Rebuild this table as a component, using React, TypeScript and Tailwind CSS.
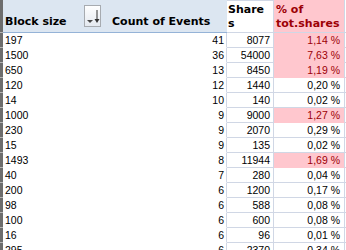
import React from "react";

type Row = [string, string, string, string, boolean];

const rows: Row[] = [
  ["197", "41", "8077", "1,14 %", true],
  ["1500", "36", "54000", "7,63 %", true],
  ["650", "13", "8450", "1,19 %", true],
  ["120", "12", "1440", "0,20 %", false],
  ["14", "10", "140", "0,02 %", false],
  ["1000", "9", "9000", "1,27 %", true],
  ["230", "9", "2070", "0,29 %", false],
  ["15", "9", "135", "0,02 %", false],
  ["1493", "8", "11944", "1,69 %", true],
  ["40", "7", "280", "0,04 %", false],
  ["200", "6", "1200", "0,17 %", false],
  ["98", "6", "588", "0,08 %", false],
  ["100", "6", "600", "0,08 %", false],
  ["16", "6", "96", "0,01 %", false],
  ["295", "6", "2370", "0,34 %", false],
];

function FilterButton() {
  return (
    <svg width="17" height="22" viewBox="0 0 17 22" className="mt-[5px] shrink-0">
      <defs>
        <linearGradient id="fb" x1="0" y1="0" x2="0" y2="1">
          <stop offset="0" stopColor="#ffffff" />
          <stop offset="1" stopColor="#e4e9f0" />
        </linearGradient>
      </defs>
      <rect x="0.5" y="0.5" width="16" height="21" fill="url(#fb)" stroke="#a7abb0" />
      <path d="M3 15h6l-3 3z" fill="#4a4a4a" />
      <path d="M13 5v11" stroke="#333" strokeWidth="1" />
      <path d="M10.5 14h5l-2.5 4z" fill="#333" />
    </svg>
  );
}

export default function App() {
  const head = "font-['DejaVu_Sans',sans-serif] font-bold text-[11px] leading-[14px]";
  const cell = "font-['Liberation_Sans',Arial,sans-serif] text-[10.5px] leading-[14px]";

  return (
    <div className="w-[346px] h-[250px] overflow-hidden bg-white">
      {/* Header */}
      <div className="flex h-[33px]">
        <div className="w-[3px] bg-[#6d6d6d] border-b border-[#b5b5b5]" />
        <div className="w-[224px] flex bg-[#dce6f1] border-b border-[#95b3d7]">
          <div className="w-[105px] flex justify-between pr-[6px] border-r border-transparent">
            <div className={`${head} self-end pl-[2px] pb-[3px] text-black`}>Block size</div>
            <FilterButton />
          </div>
          <div className={`${head} flex-1 self-end pl-[4px] pb-[3px] text-black`}>
            Count of Events
          </div>
        </div>
        <div className="w-[47px] flex flex-col justify-end bg-white border-t border-r border-b border-[#d0d7e5] pl-[1px] pb-[1px]">
          <div className={`${head} text-black`}>Share</div>
          <div className={`${head} text-black`}>s</div>
        </div>
        <div className="w-[71px] flex flex-col justify-end bg-[#ffc7ce] border-r border-b border-[#d0d7e5] pl-[2px] pb-[1px]">
          <div className={`${head} text-[#9c0006]`}>% of</div>
          <div className={`${head} text-[#9c0006]`}>tot.shares</div>
        </div>
        <div className="flex-1 border-b border-[#d0d7e5]" />
      </div>

      {/* Data rows */}
      {rows.map(([size, count, shares, pct, hot], i) => (
        <div key={i} className="flex h-[15px]">
          <div className="w-[3px] bg-[#6d6d6d] border-b border-[#b5b5b5]" />
          <div className={`${cell} w-[224px] flex justify-between border-r border-b border-r-[#d0d7e5] border-b-transparent text-black`}>
            <span className="pl-[2px]">{size}</span>
            <span className="pr-[2px]">{count}</span>
          </div>
          <div className={`${cell} w-[47px] text-right pr-[3px] border-r border-b border-[#d0d7e5] text-black`}>
            {shares}
          </div>
          <div
            className={`${cell} w-[71px] text-right pr-[4px] border-r border-b border-r-[#d0d7e5] ${
              hot ? "bg-[#ffc7ce] border-b-[#ffc7ce] text-[#9c0006]" : "border-b-[#d0d7e5] text-black"
            }`}
          >
            {pct}
          </div>
          <div className="flex-1 border-b border-[#d0d7e5]" />
        </div>
      ))}
    </div>
  );
}
